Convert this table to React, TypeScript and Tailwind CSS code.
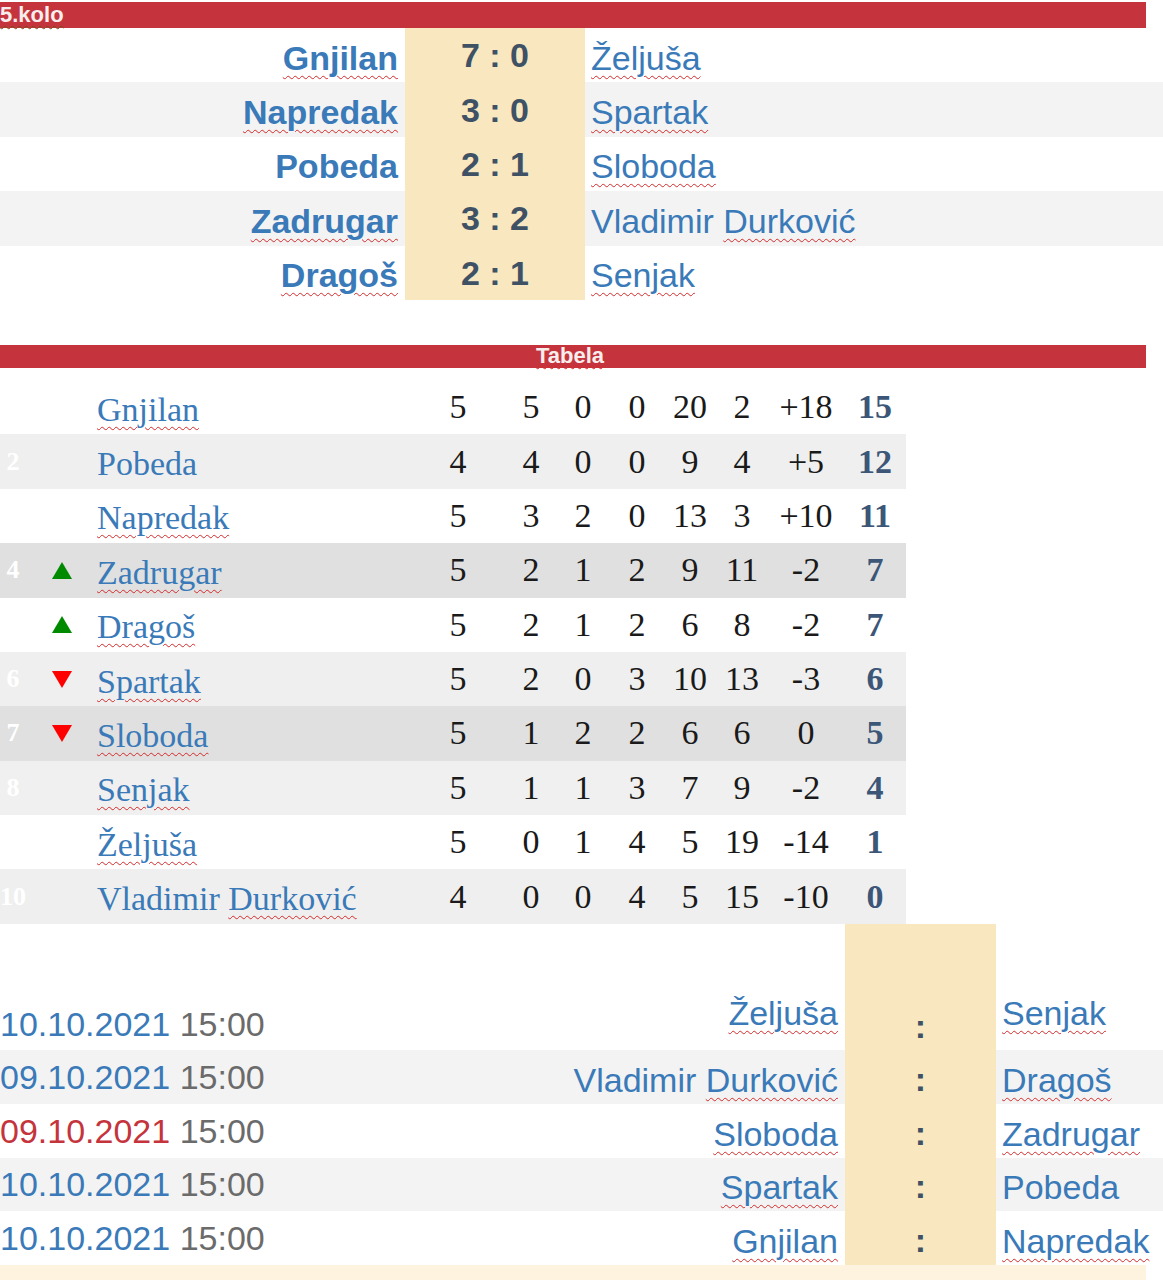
import React from "react";

const sans = "font-['Liberation_Sans',Arial,sans-serif]";
const serif = "font-['Liberation_Serif','Times_New_Roman',serif]";
const squiggle = "underline decoration-wavy decoration-[#d42a2a] decoration-1 underline-offset-[5px]";

// team names that the spell checker marks
const marked = new Set(["Gnjilan", "Napredak", "Zadrugar", "Dragoš", "Željuša", "Spartak", "Sloboda", "Senjak", "Durković"]);

const Team = ({ name }: { name: string }) => (
  <span>
    {name.split(" ").map((w, i) => (
      <React.Fragment key={i}>
        {i > 0 && " "}
        <span className={marked.has(w) ? squiggle : ""}>{w}</span>
      </React.Fragment>
    ))}
  </span>
);

const results = [
  { home: "Gnjilan", score: "7 : 0", away: "Željuša" },
  { home: "Napredak", score: "3 : 0", away: "Spartak" },
  { home: "Pobeda", score: "2 : 1", away: "Sloboda" },
  { home: "Zadrugar", score: "3 : 2", away: "Vladimir Durković" },
  { home: "Dragoš", score: "2 : 1", away: "Senjak" },
];

type Row = { pos: number; move?: "up" | "down"; team: string; stats: string[]; pts: string; bg: string };

const table: Row[] = [
  { pos: 1, team: "Gnjilan", stats: ["5", "5", "0", "0", "20", "2", "+18"], pts: "15", bg: "bg-white" },
  { pos: 2, team: "Pobeda", stats: ["4", "4", "0", "0", "9", "4", "+5"], pts: "12", bg: "bg-[#efefef]" },
  { pos: 3, team: "Napredak", stats: ["5", "3", "2", "0", "13", "3", "+10"], pts: "11", bg: "bg-white" },
  { pos: 4, move: "up", team: "Zadrugar", stats: ["5", "2", "1", "2", "9", "11", "-2"], pts: "7", bg: "bg-[#e0e0e0]" },
  { pos: 5, move: "up", team: "Dragoš", stats: ["5", "2", "1", "2", "6", "8", "-2"], pts: "7", bg: "bg-white" },
  { pos: 6, move: "down", team: "Spartak", stats: ["5", "2", "0", "3", "10", "13", "-3"], pts: "6", bg: "bg-[#efefef]" },
  { pos: 7, move: "down", team: "Sloboda", stats: ["5", "1", "2", "2", "6", "6", "0"], pts: "5", bg: "bg-[#e0e0e0]" },
  { pos: 8, team: "Senjak", stats: ["5", "1", "1", "3", "7", "9", "-2"], pts: "4", bg: "bg-[#f0f0f0]" },
  { pos: 9, team: "Željuša", stats: ["5", "0", "1", "4", "5", "19", "-14"], pts: "1", bg: "bg-white" },
  { pos: 10, team: "Vladimir Durković", stats: ["4", "0", "0", "4", "5", "15", "-10"], pts: "0", bg: "bg-[#efefef]" },
];

const statWidths = ["w-[96px]", "w-[50px]", "w-[54px]", "w-[54px]", "w-[52px]", "w-[52px]", "w-[76px]"];

const fixtures = [
  { date: "10.10.2021", time: "15:00", home: "Željuša", away: "Senjak", red: false },
  { date: "09.10.2021", time: "15:00", home: "Vladimir Durković", away: "Dragoš", red: false },
  { date: "09.10.2021", time: "15:00", home: "Sloboda", away: "Zadrugar", red: true },
  { date: "10.10.2021", time: "15:00", home: "Spartak", away: "Pobeda", red: false },
  { date: "10.10.2021", time: "15:00", home: "Gnjilan", away: "Napredak", red: false },
];

const Arrow = ({ dir }: { dir: "up" | "down" }) =>
  dir === "up" ? (
    <svg width="20" height="17" viewBox="0 0 20 17">
      <polygon points="10,0 20,17 0,17" fill="#008a00" />
    </svg>
  ) : (
    <svg width="20" height="17" viewBox="0 0 20 17">
      <polygon points="0,0 20,0 10,17" fill="#ff0000" />
    </svg>
  );

export default function App() {
  return (
    <div className={`w-[1163px] min-h-[1280px] bg-white pt-[2px] ${sans}`}>
      <div className="w-[1146px] h-[26px] bg-[#c5343c] text-[22px] leading-[26px] font-bold text-[#f6eded]">
        <span className="underline decoration-wavy decoration-[#7a4a1a] decoration-1 underline-offset-[3px]">5.kolo</span>
      </div>

      <div>
        {results.map((r, i) => (
          <div key={i} className={`flex h-[54.4px] text-[34px] leading-none ${i % 2 ? "bg-[#f3f3f3]" : "bg-white"}`}>
            <div className="w-[405px] flex items-center justify-end pr-[7px] pt-[5px] font-bold text-[#3a7ab8]">
              <Team name={r.home} />
            </div>
            <div className="w-[180px] bg-[#f8e7bf] flex items-center justify-center font-bold text-[#3f5165]">
              {r.score}
            </div>
            <div className="flex-1 flex items-center pl-[6px] pt-[5px] text-[#3a7ab8]">
              <Team name={r.away} />
            </div>
          </div>
        ))}
      </div>

      <div className="h-[45px]" />

      <div className="w-[1146px] h-[23px] pr-[6px] bg-[#c5343c] text-center text-[22px] leading-[22px] font-bold text-[#f6eded]">
        <span className="underline decoration-wavy decoration-[#d42a2a] decoration-1 underline-offset-[2px]">Tabela</span>
      </div>

      <div className="h-[12px]" />

      <div className={`w-[906px] ${serif} text-[34px] leading-none`}>
        {table.map((r) => (
          <div key={r.pos} className={`flex h-[54.4px] items-center ${r.bg}`}>
            <div className="w-[26px] flex justify-center text-[26px] font-bold text-white">{r.pos}</div>
            <div className="w-[71px] pl-[26px] flex items-center">{r.move && <Arrow dir={r.move} />}</div>
            <div className="w-[313px] pt-[5px] text-[#3a7ab8] whitespace-nowrap">
              <Team name={r.team} />
            </div>
            {r.stats.map((s, j) => (
              <div key={j} className={`${statWidths[j]} flex justify-center text-[#1a1a1a]`}>
                {s}
              </div>
            ))}
            <div className="w-[62px] flex justify-center font-bold text-[#3b5677]">{r.pts}</div>
          </div>
        ))}
      </div>

      <div className="flex h-[73px]">
        <div className="w-[845px]" />
        <div className="w-[151px] bg-[#f8e7bf]" />
      </div>

      <div className="text-[34px] leading-none">
        {fixtures.map((f, i) => (
          <div key={i} className={`flex h-[53.6px] ${i % 2 ? "bg-[#f3f3f3]" : "bg-white"}`}>
            <div className="w-[570px] flex items-center whitespace-nowrap">
              <span className={f.red ? "text-[#c5343c]" : "text-[#3a7ab8]"}>{f.date}</span>
              <span className="text-[#6b6b6b]">&nbsp;{f.time}</span>
            </div>
            <div className={`w-[275px] flex items-center justify-end pr-[7px] text-[#3a7ab8] whitespace-nowrap ${i === 0 ? "pb-[22px]" : "pt-[6px]"}`}>
              <Team name={f.home} />
            </div>
            <div className="w-[151px] bg-[#f8e7bf] flex items-center justify-center pt-[4px] font-bold text-[#3f5165]">:</div>
            <div className={`flex-1 flex items-center pl-[6px] text-[#3a7ab8] whitespace-nowrap ${i === 0 ? "pb-[22px]" : "pt-[6px]"}`}>
              <Team name={f.away} />
            </div>
          </div>
        ))}
      </div>

      <div className="w-[1146px] h-[15px] bg-[#fdf3df]" />
    </div>
  );
}
